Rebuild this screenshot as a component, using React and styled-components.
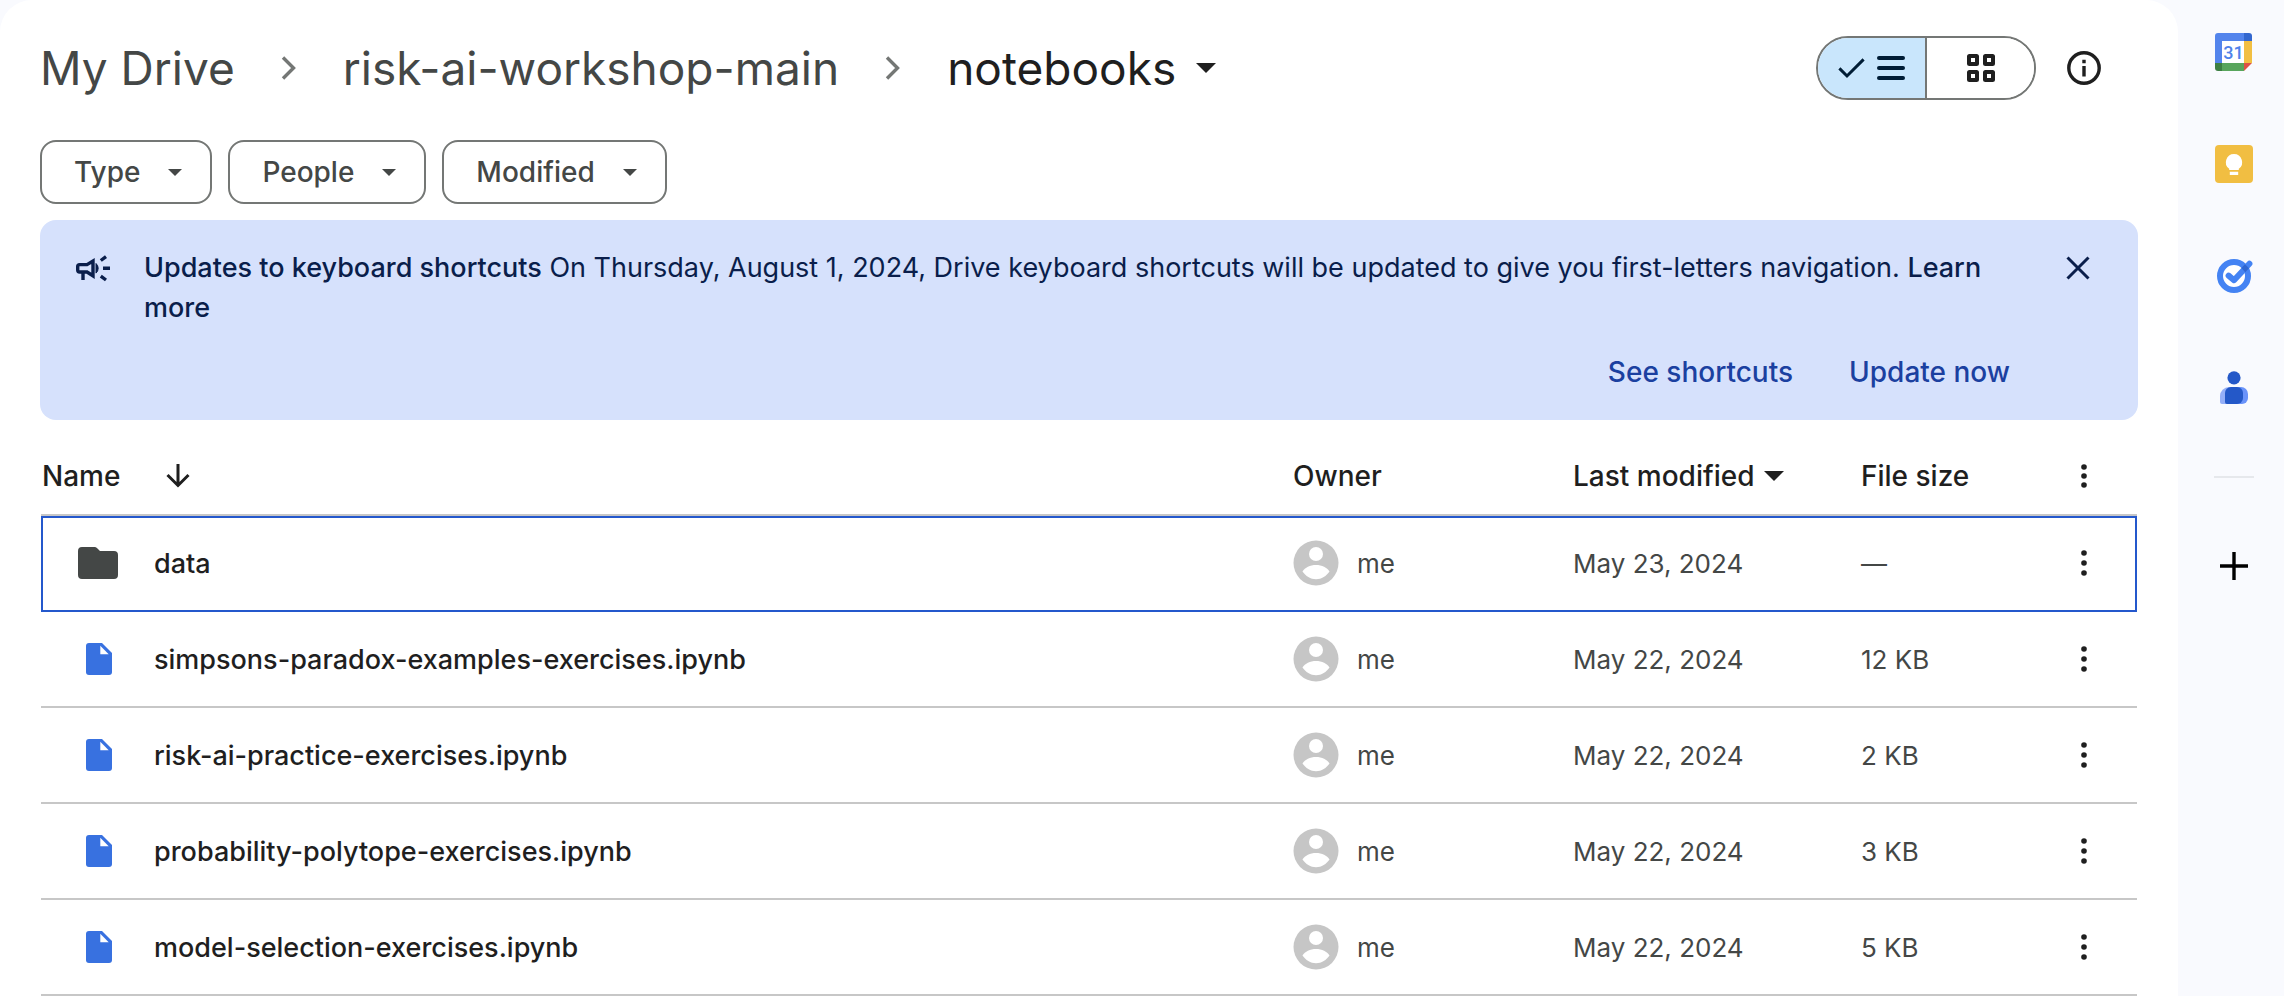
import React from "react";
import styled, { createGlobalStyle } from "styled-components";

const GlobalStyle = createGlobalStyle`
  * { box-sizing: border-box; }
  body {
    margin: 0;
    background: #f9fafe;
    font-family: Inter, "Liberation Sans", sans-serif;
    color: #1f1f1f;
  }
  button { font: inherit; color: inherit; background: none; border: 0; padding: 0; cursor: pointer; }
  svg { display: block; flex: none; }
`;

const Page = styled.div`
  display: flex;
  min-height: 100vh;
`;

const Panel = styled.main`
  flex: 1;
  min-width: 0;
  padding: 36px 40px 0;
  background: #ffffff;
  border-radius: 32px 32px 0 0;
`;

const TopBar = styled.header`
  display: flex;
  align-items: center;
  justify-content: space-between;
  height: 64px;
`;

const Crumbs = styled.ol`
  display: flex;
  align-items: center;
  gap: 42px;
  margin: 0;
  padding: 0;
  list-style: none;
`;

const CrumbItem = styled.li`
  display: flex;
  align-items: center;
  gap: 42px;
`;

const CrumbButton = styled.button`
  display: flex;
  align-items: center;
  gap: 20px;
  font-size: 46px;
  line-height: 64px;
  white-space: nowrap;
  color: ${(p) => (p.$current ? "#1f1f1f" : "#444746")};
`;

const ViewTools = styled.div`
  display: flex;
  align-items: center;
  gap: 24px;
  padding-right: 30px;
`;

const Toggle = styled.div`
  display: flex;
  width: 220px;
  height: 64px;
  border: 2px solid #747775;
  border-radius: 32px;
  overflow: hidden;
`;

const ToggleButton = styled.button`
  flex: 1;
  display: flex;
  align-items: center;
  justify-content: center;
  gap: 12px;
  color: ${(p) => (p.$selected ? "#001d35" : "#1f1f1f")};
  background: ${(p) => (p.$selected ? "#c9e6fc" : "#ffffff")};

  & + & { border-left: 2px solid #747775; }
`;

const IconButton = styled.button`
  display: flex;
  align-items: center;
  justify-content: center;
  width: 48px;
  height: 48px;
  border-radius: 24px;
`;

const Filters = styled.div`
  display: flex;
  gap: 16px;
  margin-top: 40px;
`;

const Chip = styled.button`
  display: flex;
  align-items: center;
  gap: 28px;
  height: 64px;
  padding: 0 28px 0 32px;
  border: 2px solid #747775;
  border-radius: 16px;
  font-size: 28px;
  font-weight: 500;
  color: #444746;
`;

const Banner = styled.section`
  margin-top: 16px;
  padding: 28px 36px 24px;
  border-radius: 16px;
  background: #d6e1fc;
  color: #0a1e4b;
`;

const BannerBody = styled.div`
  display: flex;
  align-items: flex-start;
  gap: 34px;
`;

const BannerIcon = styled.span`
  display: flex;
  align-items: center;
  height: 40px;
`;

const BannerText = styled.p`
  flex: 1;
  margin: 0;
  font-size: 27px;
  line-height: 40px;
`;

const Strong = styled.strong`
  font-weight: 500;
`;

const InlineLink = styled.a`
  color: inherit;
  font-weight: 500;
  text-decoration: none;
`;

const BannerClose = styled.button`
  display: flex;
  align-items: center;
  justify-content: center;
  width: 48px;
  height: 40px;
`;

const BannerActions = styled.div`
  display: flex;
  justify-content: flex-end;
  gap: 8px;
  margin-top: 20px;
  padding-right: 68px;
`;

const TextButton = styled.button`
  height: 48px;
  padding: 0 24px;
  font-size: 28px;
  font-weight: 500;
  color: #1b40a0;
`;

const FileTable = styled.table`
  width: calc(100% - 2px);
  margin: 18px 1px 0;
  table-layout: fixed;
  border-collapse: separate;
  border-spacing: 0;
  font-size: 26px;
`;

const Col = styled.col`
  width: ${(p) => p.$width};
`;

const HeadCell = styled.th`
  height: 78px;
  padding: 0 1px;
  border-bottom: 2px solid #c7c7c7;
  text-align: left;
  font-size: 28px;
  font-weight: 500;
  white-space: nowrap;
`;

const HeadContent = styled.span`
  display: flex;
  align-items: center;
  gap: ${(p) => p.$gap};
`;

const SortButton = styled.button`
  display: flex;
  align-items: center;
  gap: 10px;
`;

const Row = styled.tr`
  outline: ${(p) => (p.$focused ? "2px solid #2458cc" : "none")};
  outline-offset: -2px;
`;

const Cell = styled.td`
  height: 96px;
  padding: 0 1px;
  border-bottom: 2px solid #c7c7c7;
  color: #444746;
  white-space: nowrap;
`;

const FileName = styled.span`
  display: flex;
  align-items: center;
  gap: 36px;
  padding-left: 36px;
  font-size: 27px;
  font-weight: 500;
  color: #1f1f1f;
`;

const Owner = styled.span`
  display: flex;
  align-items: center;
  gap: 18px;
`;

const MenuButton = styled.button`
  display: flex;
  align-items: center;
  justify-content: center;
  width: 48px;
  height: 48px;
  margin: 0 auto;
  color: #1f1f1f;
`;

const SideBar = styled.aside`
  display: flex;
  flex-direction: column;
  align-items: center;
  gap: 64px;
  width: 106px;
  padding: 28px 0 0 6px;
`;

const Divider = styled.hr`
  width: 40px;
  height: 2px;
  margin: 0;
  border: 0;
  background: #e6e8ec;
`;

const Caret = ({ width = 14, height = 7 }) => (
  <svg width={width} height={height} viewBox="0 0 14 7" preserveAspectRatio="none" aria-hidden="true">
    <path d="M0 0h14L7 7z" fill="currentColor" />
  </svg>
);

const Chevron = () => (
  <svg width="24" height="28" viewBox="0 0 24 28" fill="none" stroke="#747775" strokeWidth="3.4" aria-hidden="true">
    <path d="M6 3.5 16.5 14 6 24.5" />
  </svg>
);

const CheckIcon = () => (
  <svg width="27" height="22" viewBox="0 0 27 22" fill="none" stroke="currentColor" strokeWidth="3" aria-hidden="true">
    <path d="M1.4 11.4 9 19 25.6 2.4" />
  </svg>
);

const ListIcon = () => (
  <svg width="28" height="24" viewBox="0 0 28 24" fill="currentColor" aria-hidden="true">
    <rect width="28" height="4" rx="2" />
    <rect y="10" width="28" height="4" rx="2" />
    <rect y="20" width="28" height="4" rx="2" />
  </svg>
);

const GridIcon = () => (
  <svg width="28" height="28" viewBox="0 0 28 28" fill="none" stroke="currentColor" strokeWidth="4" aria-hidden="true">
    {[[2, 2], [18, 2], [2, 18], [18, 18]].map(([x, y]) => (
      <rect key={`${x}-${y}`} x={x} y={y} width="8" height="8" rx="0.5" />
    ))}
  </svg>
);

const InfoIcon = () => (
  <svg width="34" height="34" viewBox="0 0 34 34" aria-hidden="true">
    <circle cx="17" cy="17" r="15.2" fill="none" stroke="#1f1f1f" strokeWidth="3.4" />
    <path d="M15.3 8.8h3.4v3.4h-3.4zM15.3 15h3.4v10.4h-3.4z" fill="#1f1f1f" />
  </svg>
);

const MegaphoneIcon = () => (
  <svg width="34" height="27" viewBox="0 0 34 27" aria-hidden="true">
    <g fill="none" stroke="currentColor" strokeWidth="3.4">
      <path d="M17 6v14.8L11 17H3.6A1.9 1.9 0 0 1 1.7 15.1v-3.6A1.9 1.9 0 0 1 3.6 9.6H11z" />
      <path d="M7 17v8" />
      <path d="M24.800 5.5 30 1.7M27 13.3h7M24.800 21.2 30 25" />
    </g>
    <path d="M20 8.5a6.4 6.4 0 0 1 0 9.6z" fill="currentColor" stroke="currentColor" />
  </svg>
);

const CloseIcon = () => (
  <svg width="24" height="24" viewBox="0 0 24 24" fill="none" stroke="currentColor" strokeWidth="3" aria-hidden="true">
    <path d="M1.5 1.5 22.5 22.5M22.5 1.5 1.5 22.5" />
  </svg>
);

const ArrowDown = () => (
  <svg width="24" height="24" viewBox="0 0 24 24" fill="none" stroke="currentColor" strokeWidth="3" aria-hidden="true">
    <path d="M12 0v21M1.5 11 12 21.5 22.5 11" />
  </svg>
);

const DotsIcon = ({ step = 10 }) => (
  <svg width="6" height="26" viewBox="0 0 6 26" fill="currentColor" aria-hidden="true">
    {[13 - step, 13, 13 + step].map((cy) => (
      <circle key={cy} cx="3" cy={cy} r="2.8" />
    ))}
  </svg>
);

const FolderIcon = () => (
  <svg width="40" height="32" viewBox="0 0 40 32" aria-hidden="true">
    <path d="M4 0h12.4a4 4 0 0 1 2.8 1.2L22 4h14a4 4 0 0 1 4 4v20a4 4 0 0 1-4 4H4a4 4 0 0 1-4-4V4a4 4 0 0 1 4-4z" fill="#444746" />
  </svg>
);

const FileIcon = () => (
  <svg width="40" height="32" viewBox="0 0 40 32" aria-hidden="true">
    <path d="M11 0h13l10 10v19a3 3 0 0 1-3 3H11a3 3 0 0 1-3-3V3a3 3 0 0 1 3-3z" fill="#3871e0" />
    <path d="M22.3 2.800v8.4h8.4z" fill="#ffffff" />
  </svg>
);

const Avatar = () => (
  <svg width="46" height="46" viewBox="0 0 46 46" aria-hidden="true">
    <circle cx="23" cy="23" r="22.5" fill="#c6c6c6" />
    <circle cx="23" cy="14" r="7" fill="#ffffff" />
    <path d="M9.5 31.5C12 27.5 17 25 23 25s11 2.5 13.5 6.5C33.5 36 28.5 39.2 23 39.2S12.5 36 9.5 31.5z" fill="#ffffff" />
  </svg>
);

const CalendarIcon = () => (
  <svg width="38" height="38" viewBox="0 0 38 38" aria-hidden="true">
    <path d="M3 0h27v8H8v22H0V3a3 3 0 0 1 3-3z" fill="#5384ec" />
    <path d="M29 0h5a3 3 0 0 1 3 3v5h-8z" fill="#3367cf" />
    <path d="M29 8h8v22h-8z" fill="#f2bf42" />
    <path d="M7 30h22v8H7z" fill="#58a55c" />
    <path d="M0 30h7v8H3a3 3 0 0 1-3-3z" fill="#3d7f43" />
    <path d="M29 30h8l-8 8z" fill="#dd5144" />
    <path d="M7 8h22v22H7z" fill="#ffffff" />
    <text x="18.5" y="26" textAnchor="middle" fontFamily="Roboto, sans-serif" fontSize="18" fontWeight="500" fill="#4f82ea">31</text>
  </svg>
);

const KeepIcon = () => (
  <svg width="38" height="38" viewBox="0 0 38 38" aria-hidden="true">
    <rect width="38" height="38" rx="4" fill="#f1be42" />
    <path d="M19 9a8.2 8.2 0 0 1 4.8 14.800V25h-9.6v-1.2A8.2 8.2 0 0 1 19 9zM14.8 26.8h8.4V30h-8.4z" fill="#ffffff" />
  </svg>
);

const TasksIcon = () => (
  <svg width="38" height="38" viewBox="0 0 38 38" fill="none" strokeLinejoin="round" aria-hidden="true">
    <circle cx="19" cy="19" r="14" fill="#ffffff" stroke="#4483f3" strokeWidth="6" />
    <path d="M13.6 18.6 19 23.2 34.4 6.8" stroke="#4483f3" strokeWidth="6" strokeLinecap="round" />
    <path d="M26.4 11 30 7.2 34 11.2 30.2 15.200z" fill="#2f66d0" />
  </svg>
);

const ContactsIcon = () => (
  <svg width="38" height="38" viewBox="0 0 38 38" aria-hidden="true">
    <circle cx="19" cy="8.8" r="6.6" fill="#2458c8" />
    <path d="M14 18h7v17H7a2 2 0 0 1-2-2v-6a9 9 0 0 1 9-9z" fill="#95aff8" />
    <path d="M18 18h8a7 7 0 0 1 7 7v4a6 6 0 0 1-6 6h-9z" fill="#6a93fa" />
    <path d="M16 18h6a6 6 0 0 1 6 6v5a6 6 0 0 1-6 6H12a2 2 0 0 1-2-2v-9a6 6 0 0 1 6-6z" fill="#2458c8" />
  </svg>
);

const PlusIcon = () => (
  <svg width="28" height="28" viewBox="0 0 28 28" fill="none" stroke="#000000" strokeWidth="3.4" aria-hidden="true">
    <path d="M14 0v28M0 14h28" />
  </svg>
);

const files = [
  { name: "data", folder: true, date: "May 23, 2024", size: "—" },
  { name: "simpsons-paradox-examples-exercises.ipynb", date: "May 22, 2024", size: "12 KB" },
  { name: "risk-ai-practice-exercises.ipynb", date: "May 22, 2024", size: "2 KB" },
  { name: "probability-polytope-exercises.ipynb", date: "May 22, 2024", size: "3 KB" },
  { name: "model-selection-exercises.ipynb", date: "May 22, 2024", size: "5 KB" },
];

const apps = [
  { label: "Calendar", Icon: CalendarIcon },
  { label: "Keep", Icon: KeepIcon },
  { label: "Tasks", Icon: TasksIcon },
  { label: "Contacts", Icon: ContactsIcon },
];

export default function App() {
  return (
    <>
      <GlobalStyle />
      <Page>
        <Panel>
          <TopBar>
            <nav aria-label="Breadcrumb">
              <Crumbs>
                <CrumbItem>
                  <CrumbButton>My Drive</CrumbButton>
                  <Chevron />
                </CrumbItem>
                <CrumbItem>
                  <CrumbButton>risk-ai-workshop-main</CrumbButton>
                  <Chevron />
                </CrumbItem>
                <CrumbItem>
                  <CrumbButton $current aria-haspopup="menu">
                    notebooks
                    <Caret width={20} height={10} />
                  </CrumbButton>
                </CrumbItem>
              </Crumbs>
            </nav>
            <ViewTools>
              <Toggle role="group" aria-label="Layout">
                <ToggleButton $selected aria-pressed="true" aria-label="List layout">
                  <CheckIcon />
                  <ListIcon />
                </ToggleButton>
                <ToggleButton aria-pressed="false" aria-label="Grid layout">
                  <GridIcon />
                </ToggleButton>
              </Toggle>
              <IconButton aria-label="View details">
                <InfoIcon />
              </IconButton>
            </ViewTools>
          </TopBar>

          <Filters>
            {["Type", "People", "Modified"].map((label) => (
              <Chip key={label} aria-haspopup="menu">
                {label}
                <Caret />
              </Chip>
            ))}
          </Filters>

          <Banner>
            <BannerBody>
              <BannerIcon>
                <MegaphoneIcon />
              </BannerIcon>
              <BannerText>
                <Strong>Updates to keyboard shortcuts</Strong> On Thursday, August 1, 2024, Drive keyboard
                shortcuts will be updated to give you first-letters navigation.{" "}
                <InlineLink href="#learn-more">Learn more</InlineLink>
              </BannerText>
              <BannerClose aria-label="Close">
                <CloseIcon />
              </BannerClose>
            </BannerBody>
            <BannerActions>
              <TextButton>See shortcuts</TextButton>
              <TextButton>Update now</TextButton>
            </BannerActions>
          </Banner>

          <FileTable>
            <colgroup>
              <Col $width="auto" />
              <Col $width="280px" />
              <Col $width="288px" />
              <Col $width="170px" />
              <Col $width="107px" />
            </colgroup>
            <thead>
              <tr>
                <HeadCell scope="col">
                  <HeadContent $gap="34px">
                    Name
                    <IconButton aria-label="Reverse sort direction">
                      <ArrowDown />
                    </IconButton>
                  </HeadContent>
                </HeadCell>
                <HeadCell scope="col">Owner</HeadCell>
                <HeadCell scope="col">
                  <SortButton>
                    Last modified
                    <Caret width={20} height={10} />
                  </SortButton>
                </HeadCell>
                <HeadCell scope="col">File size</HeadCell>
                <HeadCell scope="col">
                  <MenuButton aria-label="More sorting options">
                    <DotsIcon step={9} />
                  </MenuButton>
                </HeadCell>
              </tr>
            </thead>
            <tbody>
              {files.map((file) => (
                <Row key={file.name} $focused={file.folder}>
                  <Cell>
                    <FileName>
                      {file.folder ? <FolderIcon /> : <FileIcon />}
                      {file.name}
                    </FileName>
                  </Cell>
                  <Cell>
                    <Owner>
                      <Avatar />
                      me
                    </Owner>
                  </Cell>
                  <Cell>{file.date}</Cell>
                  <Cell>{file.size}</Cell>
                  <Cell>
                    <MenuButton aria-label={`More actions for ${file.name}`}>
                      <DotsIcon />
                    </MenuButton>
                  </Cell>
                </Row>
              ))}
            </tbody>
          </FileTable>
        </Panel>

        <SideBar aria-label="Side panel">
          {apps.map(({ label, Icon }) => (
            <IconButton key={label} aria-label={label}>
              <Icon />
            </IconButton>
          ))}
          <Divider />
          <IconButton aria-label="Get add-ons">
            <PlusIcon />
          </IconButton>
        </SideBar>
      </Page>
    </>
  );
}
